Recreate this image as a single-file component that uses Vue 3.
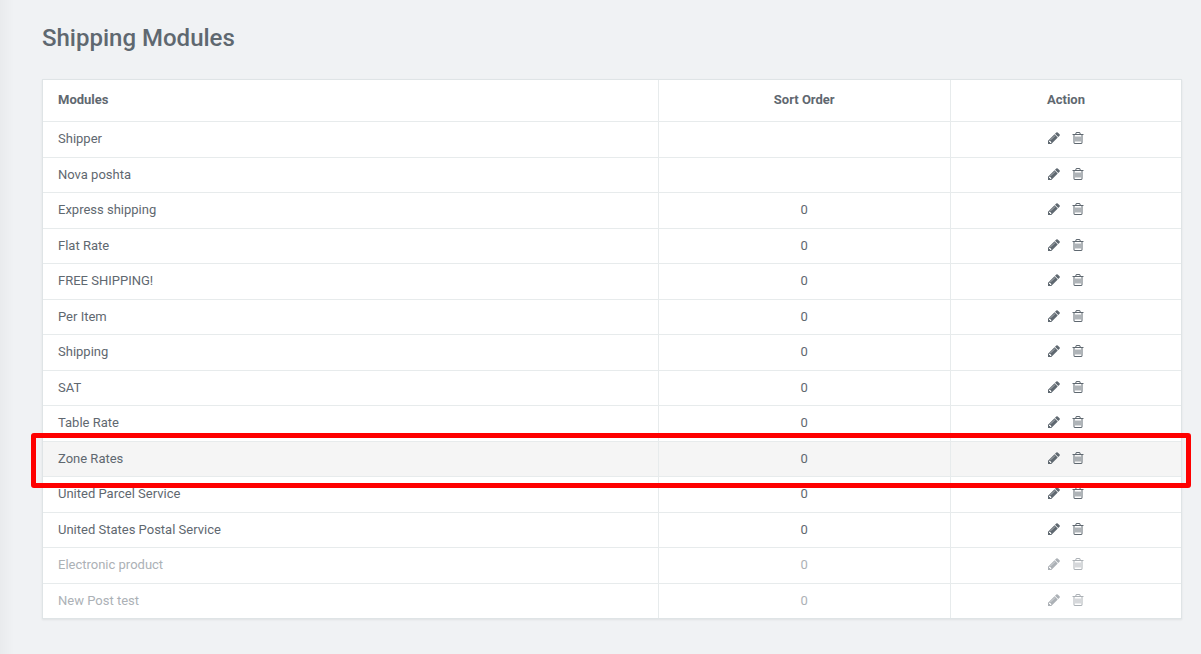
<template>
  <main class="page">
    <h1 class="page-title">Shipping Modules</h1>
    <table class="modules">
      <thead>
        <tr>
          <th class="col-name" scope="col">Modules</th>
          <th class="col-sort" scope="col">Sort Order</th>
          <th scope="col">Action</th>
        </tr>
      </thead>
      <tbody>
        <tr
            v-for="item in modules"
            :key="item.name"
            :class="{ disabled: item.disabled, selected: item.name === selected }"
        >
          <td>
            {{ item.name }}
            <span v-if="item.name === selected" class="marker"></span>
          </td>
          <td>{{ item.sort }}</td>
          <td>
            <div class="actions">
              <button type="button" :aria-label="'Edit ' + item.name">
                <svg viewBox="0 0 1792 1792"><path :d="pencil" /></svg>
              </button>
              <button type="button" :aria-label="'Delete ' + item.name">
                <svg viewBox="0 0 1792 1792"><path :d="trash" /></svg>
              </button>
            </div>
          </td>
        </tr>
      </tbody>
    </table>
  </main>
</template>

<script setup>
import { ref } from "vue";

const selected = ref("Zone Rates");

const modules = ref([
  { name: "Shipper" },
  { name: "Nova poshta" },
  { name: "Express shipping", sort: 0 },
  { name: "Flat Rate", sort: 0 },
  { name: "FREE SHIPPING!", sort: 0 },
  { name: "Per Item", sort: 0 },
  { name: "Shipping", sort: 0 },
  { name: "SAT", sort: 0 },
  { name: "Table Rate", sort: 0 },
  { name: "Zone Rates", sort: 0 },
  { name: "United Parcel Service", sort: 0 },
  { name: "United States Postal Service", sort: 0 },
  { name: "Electronic product", sort: 0, disabled: true },
  { name: "New Post test", sort: 0, disabled: true },
]);

// Icon outlines
const pencil =
  "M491 1536l91-91-235-235-91 91v107h128v128h107zm523-928q0-22-22-22-10 0-17 7l-542 542q-7 7-7 17 0 22 22 22 10 0 17-7l542-542q7-7 7-17zm-54-192l416 416-832 832h-416v-416zm683 96q0 53-37 90l-166 166-416-416 166-165q36-38 90-38 53 0 91 38l235 234q37 39 37 91z";
const trash =
  "M704 736v576q0 14-9 23t-23 9h-64q-14 0-23-9t-9-23v-576q0-14 9-23t23-9h64q14 0 23 9t9 23zm256 0v576q0 14-9 23t-23 9h-64q-14 0-23-9t-9-23v-576q0-14 9-23t23-9h64q14 0 23 9t9 23zm256 0v576q0 14-9 23t-23 9h-64q-14 0-23-9t-9-23v-576q0-14 9-23t23-9h64q14 0 23 9t9 23zm128 724v-948h-896v948q0 22 7 40.5t14.5 27 10.5 8.5h832q3 0 10.5-8.5t14.5-27 7-40.5zm-672-1076h448l-48-117q-7-9-17-11h-317q-10 2-17 11zm928 32v64q0 14-9 23t-23 9h-96v948q0 83-47 143.5t-113 60.5h-832q-66 0-113-58.500t-47-141.500v-952h-96q-14 0-23-9t-9-23v-64q0-14 9-23t23-9h309l70-167q15-37 54-63t79-26h320q40 0 79 26t54 63l70 167h309q14 0 23 9t9 23z";
</script>

<style>
body {
  margin: 0;
  background: #f0f2f4;
}
</style>

<style scoped>
.page {
  box-sizing: border-box;
  min-height: 100vh;
  padding: 22px 19px 22px 42px;
  background: linear-gradient(to right, #e9ebed, #f0f2f4 14px);
  color: #5f6870;
  font-family: Roboto, "Liberation Sans", sans-serif;
  font-size: 13px;
  line-height: 20px;
}
.page-title {
  margin: 0 0 25px;
  font-size: 24px;
  font-weight: 500;
  line-height: 32px;
}
.modules {
  width: 100%;
  table-layout: fixed;
  border-collapse: separate;
  border-spacing: 0;
  border: 1px solid #dfe4e6;
  background: #fff;
  box-shadow: 0 1px 2px rgba(0, 0, 0, 0.07);
}
.col-name {
  width: 54%;
}
.col-sort {
  width: 25.7%;
}
th,
td {
  box-sizing: border-box;
  padding: 7px 15px 8px;
  border-bottom: 1px solid #e7ebec;
  text-align: center;
  vertical-align: top;
}
th {
  padding: 10px 15px 11px;
  font-weight: 700;
}
th:first-child,
td:first-child {
  text-align: left;
}
th + th,
td + td {
  border-left: 1px solid #e7ebec;
}
tbody tr {
  position: relative;
}
tbody tr:nth-child(even) td {
  padding-bottom: 7px;
}
tbody tr:last-child td {
  border-bottom: 0;
}
.selected {
  background: #f5f5f5;
}
.disabled {
  color: #acb1b6;
}
.marker {
  position: absolute;
  z-index: 1;
  inset: -9px -10px -11px -12px;
  border: 5px solid #fe0000;
  border-radius: 3px;
  pointer-events: none;
}
.actions {
  display: flex;
  justify-content: center;
  align-items: center;
  gap: 10px;
  height: 18px;
}
.actions button {
  display: block;
  padding: 0;
  border: 0;
  background: none;
  color: inherit;
  cursor: pointer;
}
.actions svg {
  display: block;
  width: 14px;
  height: 14px;
  fill: currentColor;
}
</style>
